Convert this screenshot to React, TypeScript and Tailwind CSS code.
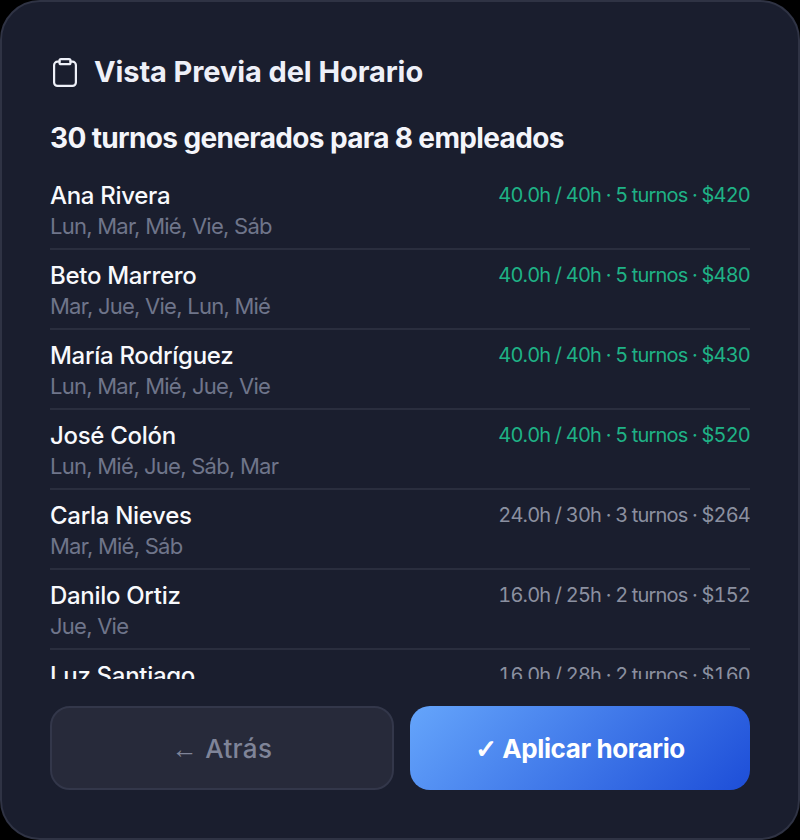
const rows = [
  ["Ana Rivera", "Lun, Mar, Mié, Vie, Sáb", "40.0h / 40h · 5 turnos · $420", true],
  ["Beto Marrero", "Mar, Jue, Vie, Lun, Mié", "40.0h / 40h · 5 turnos · $480", true],
  ["María Rodríguez", "Lun, Mar, Mié, Jue, Vie", "40.0h / 40h · 5 turnos · $430", true],
  ["José Colón", "Lun, Mié, Jue, Sáb, Mar", "40.0h / 40h · 5 turnos · $520", true],
  ["Carla Nieves", "Mar, Mié, Sáb", "24.0h / 30h · 3 turnos · $264", false],
  ["Danilo Ortiz", "Jue, Vie", "16.0h / 25h · 2 turnos · $152", false],
  ["Luz Santiago", "Mar, Vie", "16.0h / 28h · 2 turnos · $160", false],
] as const;

export default function App() {
  return (
    <div className="w-[800px] h-[840px] bg-black font-['Inter',sans-serif]">
      <div className="w-full h-full flex flex-col rounded-[40px] border-2 border-[#2f3344] bg-[#1a1e2e] px-[48px] pt-[48px]">
        <div className="flex items-center gap-[17px] h-[44px]">
          <svg className="ml-[3px]" width="24" height="29" viewBox="0 0 24 29" fill="none" stroke="#eef0f8" strokeWidth="2.2" strokeLinecap="round" strokeLinejoin="round">
            <rect x="6.5" y="1.2" width="11" height="5" rx="1.5" />
            <path d="M6.5 3.7H4.5a3.4 3.4 0 0 0-3.4 3.4v17.4a3.4 3.4 0 0 0 3.4 3.4h15a3.4 3.4 0 0 0 3.4-3.4V7.1a3.4 3.4 0 0 0-3.4-3.4h-2" />
          </svg>
          <h1 className="text-[29px] font-bold text-[#eef0f8] tracking-[-0.1px] leading-none -mt-[2px]">Vista Previa del Horario</h1>
        </div>
        <h2 className="mt-[28px] text-[28px] leading-[32px] font-bold text-[#f4f5fa] tracking-[-0.64px]">30 turnos generados para 8 empleados</h2>
        <div className="mt-[16px] h-[509px] shrink-0 overflow-hidden">
          {rows.map(([name, days, info, full]) => (
            <div key={name} className="h-[80px] pt-[11px] flex items-start justify-between border-b-2 border-[#2a2e3e]">
              <div>
                <div className="text-[24px] leading-[30px] font-medium text-[#f8f9fc] tracking-[-0.3px]">{name}</div>
                <div className="text-[22px] leading-[30px] text-[#6f758a] tracking-[-0.75px]">{days}</div>
              </div>
              <div className={`text-[20px] leading-[28px] tracking-[-0.82px] tabular-nums ${full ? "text-[#1fb286]" : "text-[#8b90a0]"}`}>{info}</div>
            </div>
          ))}
        </div>
        <div className="mt-[27px] flex gap-[16px]">
          <button className="w-[344px] h-[84px] pt-[1px] rounded-[20px] border-2 border-[#33374a] bg-[#272a3a] text-[26px] font-medium text-[#7f8498] tracking-[0.3px]">
            <span className="font-['Liberation_Sans',sans-serif] font-normal">←</span> Atrás
          </button>
          <button className="w-[340px] h-[84px] pt-[1px] rounded-[20px] bg-[linear-gradient(135deg,#65a5fb,#1d4ed8)] text-[26px] font-bold text-white tracking-[-0.4px]">
            <span className="font-['DejaVu_Sans',sans-serif] [-webkit-text-stroke:1px_white]">✓</span> Aplicar horario
          </button>
        </div>
      </div>
    </div>
  );
}
